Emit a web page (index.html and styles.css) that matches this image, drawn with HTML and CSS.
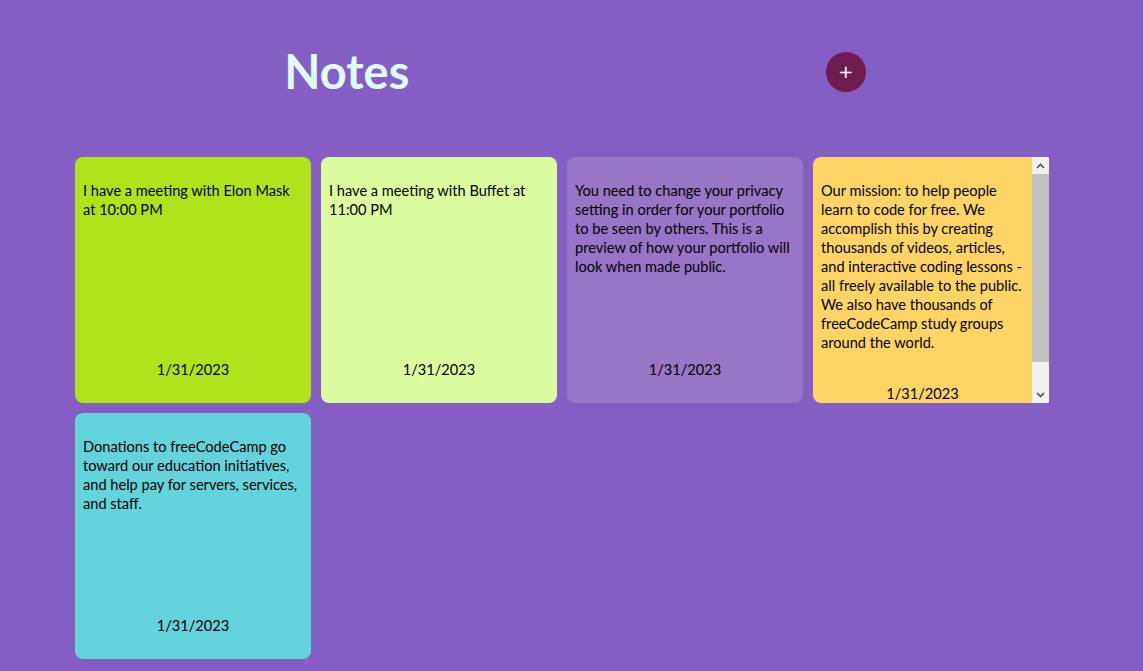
FILE: index.html
```html
<!DOCTYPE html>
<html lang="en">
<head>
<meta charset="utf-8">
<title>Notes</title>
<link rel="stylesheet" href="styles.css">
</head>
<body>
<header class="header">
  <h1 class="title">Notes</h1>
  <button class="add-btn" type="button">+</button>
</header>
<main class="notes">
  <div class="note note-lime">
    <p class="note-text">I have a meeting with Elon Mask at 10:00 PM</p>
    <p class="note-date">1/31/2023</p>
  </div>
  <div class="note note-pale">
    <p class="note-text">I have a meeting with Buffet at 11:00 PM</p>
    <p class="note-date">1/31/2023</p>
  </div>
  <div class="note note-violet">
    <p class="note-text">You need to change your privacy setting in order for your portfolio to be seen by others. This is a preview of how your portfolio will look when made public.</p>
    <p class="note-date">1/31/2023</p>
  </div>
  <div class="note-long note-amber">
    <div class="note note-scroll">
      <p class="note-text">Our mission: to help people learn to code for free. We accomplish this by creating thousands of videos, articles, and interactive coding lessons - all freely available to the public. We also have thousands of freeCodeCamp study groups around the world.</p>
      <p class="note-date">1/31/2023</p>
    </div>
    <div class="scrollbar" aria-hidden="true">
      <div class="sb-btn">
        <svg width="9" height="6" viewBox="0 0 9 6"><path d="M1 5 L4.5 1.5 L8 5" fill="none" stroke="#505050" stroke-width="1.6"/></svg>
      </div>
      <div class="sb-thumb"></div>
      <div class="sb-track"></div>
      <div class="sb-btn">
        <svg width="9" height="6" viewBox="0 0 9 6"><path d="M1 1 L4.5 4.5 L8 1" fill="none" stroke="#505050" stroke-width="1.6"/></svg>
      </div>
    </div>
  </div>
  <div class="note note-cyan">
    <p class="note-text">Donations to freeCodeCamp go toward our education initiatives, and help pay for servers, services, and staff.</p>
    <p class="note-date">1/31/2023</p>
  </div>
</main>
</body>
</html>
```
FILE: styles.css
```css
* { box-sizing: border-box; }
html, body { margin: 0; padding: 0; }
body {
  background: #845ec2;
  font-family: Lato, "Open Sans", sans-serif;
  min-height: 671px;
}
.header {
  display: flex;
  justify-content: space-around;
  align-items: center;
  width: 998px;
  margin-left: 76px;
  height: 143px;
}
.title {
  margin: 0;
  font-size: 47px;
  font-weight: 700;
  color: #e0fbfc;
  line-height: 1;
}
.add-btn {
  width: 40px;
  height: 40px;
  border-radius: 50%;
  border: none;
  background: #6f1d50;
  color: #fff;
  font-size: 18px;
  line-height: 1;
  padding: 0;
  font-family: "DejaVu Sans", sans-serif;
}
.notes {
  display: grid;
  grid-template-columns: repeat(4, 236px);
  grid-auto-rows: 246px;
  gap: 10px;
  padding-left: 75px;
  margin-top: 14px;
}
.note {
  display: flex;
  flex-direction: column;
  justify-content: space-between;
  padding: 8px;
  border-radius: 8px;
  color: #000;
  font-size: 14.6px;
  line-height: 19px;
  overflow: hidden;
}
.note p { margin: 16px 0; }
.note-date { text-align: center; }
.note-lime { background: #b1e31d; }
.note-pale { background: #dcfca1; }
.note-violet { background: #9775c7; }
.note-amber { background: #ffd466; }
.note-cyan { background: #65d3dc; }

.note-long {
  display: flex;
  border-radius: 8px 0 0 8px;
  overflow: hidden;
}
.note-scroll {
  flex: 1;
  min-width: 0;
  border-radius: 0;
}
.scrollbar {
  width: 17px;
  flex: none;
  display: flex;
  flex-direction: column;
  background: #f1f1f1;
}
.sb-btn {
  height: 17px;
  display: flex;
  align-items: center;
  justify-content: center;
}
.sb-thumb {
  height: 188px;
  background: #c1c1c1;
}
.sb-track { flex: 1; }
```
